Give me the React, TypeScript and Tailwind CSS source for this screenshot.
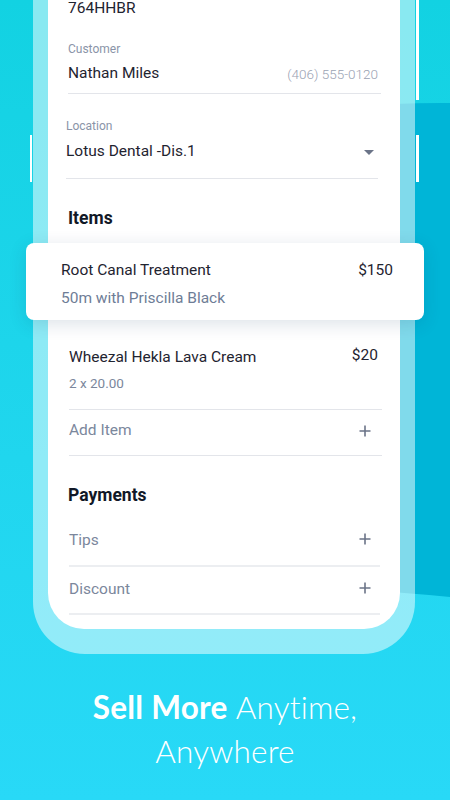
const Plus = () => (
  <svg width="12" height="12" viewBox="0 0 12 12" className="text-[#6b7488]">
    <path d="M6 0.5v11M0.5 6h11" stroke="currentColor" strokeWidth="1.6" />
  </svg>
);

const Caret = () => (
  <svg width="10" height="5" viewBox="0 0 10 5" className="text-[#6b7488]">
    <path d="M0 0h10L5 5z" fill="currentColor" />
  </svg>
);

export default function App() {
  return (
    <div className="relative w-[450px] h-[800px] overflow-hidden bg-gradient-to-b from-[#12d2e2] to-[#28d9f7] font-['Roboto',sans-serif]">
      {/* darker blob behind the phone */}
      <svg className="absolute inset-0" width="450" height="800" viewBox="0 0 450 800">
        <path d="M230 125 Q340 102 450 103 L450 597 Q360 588 230 582 Z" fill="#00b5d7" />
      </svg>

      <div className="relative flex flex-col">
        {/* Phone frame */}
        <div className="relative mx-[33px] w-[382px] bg-white/50 px-[15px] pb-[25px] rounded-b-[52px]">
          <div className="absolute right-[-4px] top-0 w-[3px] h-[100px] bg-white" />
          <div className="absolute right-[-4px] top-[135px] w-[3px] h-[47px] bg-white" />
          <div className="absolute left-[-3px] top-[135px] w-[2px] h-[47px] bg-white" />

          {/* Screen */}
          <div className="bg-white rounded-b-[36px] pb-[14px] flex flex-col">
            <div className="pl-[20px] h-[16px] leading-[16px] text-[15.5px] text-[#1f2430]">764HHBR</div>

            <div className="pl-[20px] pr-[19px]">
              <div className="mt-[26px] h-[14px] leading-[14px] text-[12px] text-[#8a94a8]">Customer</div>
              <div className="mt-[8px] h-[20px] flex items-center justify-between">
                <span className="text-[15.5px] text-[#1f2430]">Nathan Miles</span>
                <span className="text-[13.5px] font-light text-[#9aa2b3] pr-[3px]">(406) 555-0120</span>
              </div>
              <div className="mt-[9px] border-b border-[#e3e5ea]" />
            </div>

            <div className="pl-[18px] pr-[22px]">
              <div className="mt-[25px] h-[14px] leading-[14px] text-[12px] text-[#8a94a8]">Location</div>
              <div className="mt-[9px] h-[20px] flex items-center justify-between">
                <span className="text-[15.5px] text-[#1f2430]">Lotus Dental -Dis.1</span>
                <span className="pr-[4px] flex"><Caret /></span>
              </div>
              <div className="mt-[16px] border-b border-[#e3e5ea]" />
            </div>

            <div className="pl-[20px] mt-[29px] h-[20px] leading-[20px] text-[17.5px] font-bold text-[#111827]">Items</div>

            {/* Highlighted item card */}
            <div className="mt-[15px] mx-[-22px] mr-[-24px] bg-white rounded-[8px] shadow-[0_4px_18px_rgba(0,50,90,0.14)] pl-[35px] pr-[31px] pt-[18px] pb-[12px]">
              <div className="h-[20px] flex items-center justify-between text-[15.5px] text-[#1f2430]">
                <span>Root Canal Treatment</span>
                <span>$150</span>
              </div>
              <div className="mt-[7px] h-[20px] leading-[20px] text-[15.5px] text-[#6e7d96]">50m with Priscilla Black</div>
            </div>

            <div className="pl-[21px] pr-[18px]">
              <div className="mt-[27px] h-[20px] flex justify-between text-[15.5px] text-[#1f2430]">
                <span className="leading-[20px]">Wheezal Hekla Lava Cream</span>
                <span className="leading-[16px] pr-[4px]">$20</span>
              </div>
              <div className="mt-[8px] h-[16px] leading-[16px] text-[13.5px] text-[#7b879c]">2 x 20.00</div>
              <div className="mt-[18px] border-b border-[#e3e5ea]" />
              <div className="mt-[11px] h-[20px] flex items-center justify-between">
                <span className="text-[15.5px] text-[#7b879c]">Add Item</span>
                <span className="pr-[11px] flex"><Plus /></span>
              </div>
              <div className="mt-[14px] border-b border-[#e3e5ea]" />
            </div>

            <div className="pl-[20px] mt-[29px] h-[20px] leading-[20px] text-[17.5px] font-bold text-[#111827]">Payments</div>

            <div className="pl-[21px] pr-[20px]">
              <div className="mt-[26px] h-[20px] flex items-center justify-between">
                <span className="text-[15.5px] text-[#7b879c]">Tips</span>
                <span className="pr-[9px] flex mb-[4px]"><Plus /></span>
              </div>
              <div className="mt-[14px] border-b-2 border-[#eceef1]" />
              <div className="mt-[13px] h-[20px] flex items-center justify-between">
                <span className="text-[15.5px] text-[#7b879c]">Discount</span>
                <span className="pr-[9px] flex mb-[4px]"><Plus /></span>
              </div>
              <div className="mt-[13px] border-b-2 border-[#eceef1]" />
            </div>
          </div>
        </div>

        {/* Headline */}
        <div className="mt-[31px] text-center text-white text-[31.5px] leading-[44px] font-['Lato',sans-serif] tracking-[0.2px]">
          <div>
            <span className="font-bold">Sell More</span> <span className="font-light">Anytime,</span>
          </div>
          <div className="font-light">Anywhere</div>
        </div>
      </div>
    </div>
  );
}
